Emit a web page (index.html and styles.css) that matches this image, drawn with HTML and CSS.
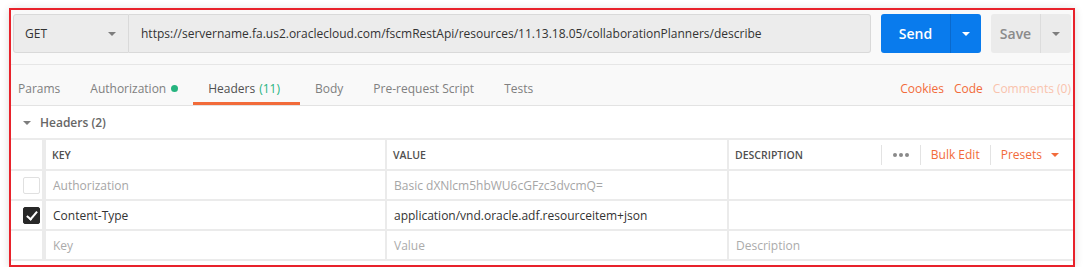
FILE: index.html
```html
<!DOCTYPE html>
<html lang="en-US">

<head>
    <meta charset="utf-8">
    <title>Request - Headers</title>
    <link rel="stylesheet" href="styles.css">
</head>

<body>
    <section class="frame">
        <div class="request">
            <div class="method">GET <i class="caret"></i></div>
            <div class="url">https://servername.fa.us2.oraclecloud.com/fscmRestApi/resources/11.13.18.05/collaborationPlanners/describe</div>
            <div class="btn btn-send">
                <span class="btn-label">Send</span>
                <span class="btn-drop"><i class="caret caret-white"></i></span>
            </div>
            <div class="btn btn-save">
                <span class="btn-label">Save</span>
                <span class="btn-drop"><i class="caret"></i></span>
            </div>
        </div>

        <div class="tabs">
            <ul class="tab-list">
                <li class="tab">Params</li>
                <li class="tab">Authorization <span class="dot"></span></li>
                <li class="tab active">Headers <span class="count">(11)</span></li>
                <li class="tab">Body</li>
                <li class="tab">Pre-request Script</li>
                <li class="tab">Tests</li>
            </ul>
            <div class="tab-links">
                <span class="link">Cookies</span>
                <span class="link">Code</span>
                <span class="link link-muted">Comments (0)</span>
            </div>
        </div>

        <div class="section-title"><i class="caret"></i>Headers (2)</div>

        <div class="kv">
            <div class="kv-row kv-head">
                <div class="cell cell-check"></div>
                <div class="cell">KEY</div>
                <div class="cell">VALUE</div>
                <div class="cell cell-desc">
                    DESCRIPTION
                    <div class="kv-actions">
                        <span class="action dots"><b></b><b></b><b></b></span>
                        <span class="action">Bulk Edit</span>
                        <span class="action">Presets <i class="caret caret-orange"></i></span>
                    </div>
                </div>
            </div>
            <div class="kv-row disabled">
                <div class="cell cell-check"><span class="checkbox"></span></div>
                <div class="cell">Authorization</div>
                <div class="cell">Basic dXNlcm5hbWU6cGFzc3dvcmQ=</div>
                <div class="cell"></div>
            </div>
            <div class="kv-row">
                <div class="cell cell-check"><span class="checkbox checked"></span></div>
                <div class="cell">Content-Type</div>
                <div class="cell">application/vnd.oracle.adf.resourceitem+json</div>
                <div class="cell"></div>
            </div>
            <div class="kv-row placeholder">
                <div class="cell cell-check"></div>
                <div class="cell">Key</div>
                <div class="cell">Value</div>
                <div class="cell">Description</div>
            </div>
        </div>
    </section>
</body>

</html>
```

FILE: styles.css
```css
html {
    background: #fff;
}

body {
    margin: 0;
    color: #333;
    font-family: "Open Sans", "Noto Sans", sans-serif;
    font-size: 12px;
}

.frame {
    box-sizing: border-box;
    width: 1066px;
    height: 259px;
    margin: 8px 0 0 9px;
    border: 2px solid #e8222b;
    background: #fff;
    box-shadow: 0 1px 8px rgba(0, 0, 0, 0.14);
}

/* triangles */
.caret {
    display: inline-block;
    width: 0;
    height: 0;
    border-left: 4px solid transparent;
    border-right: 4px solid transparent;
    border-top: 4px solid #7d7d7d;
}

.caret-white {
    border-top-color: #fff;
}

.caret-orange {
    border-top-color: #f26b3a;
    margin-left: 9px;
}

/* request bar */
.request {
    display: flex;
    padding: 4px 2px 11px;
    background: #f9f9f9;
    border-bottom: 1px solid #e6e6e6;
}

.method, .url {
    box-sizing: border-box;
    height: 39px;
    display: flex;
    align-items: center;
    background: #ececec;
    border: 1px solid #d9d9d9;
}

.method {
    width: 116px;
    padding: 0 12px 0 11px;
    justify-content: space-between;
    border-radius: 3px 0 0 3px;
}

.url {
    flex: 1;
    padding-left: 12px;
    border-left: none;
    border-radius: 0 3px 3px 0;
    white-space: nowrap;
    overflow: hidden;
}

.btn {
    display: flex;
    height: 39px;
    margin-left: 10px;
    border-radius: 3px;
    font-size: 14px;
    font-weight: 600;
}

.btn-label {
    display: flex;
    align-items: center;
    justify-content: center;
}

.btn-drop {
    width: 30px;
    display: flex;
    align-items: center;
    justify-content: center;
}

.btn-send {
    width: 100px;
    background: #097bed;
    color: #fff;
}

.btn-send .btn-label {
    width: 69px;
    border-right: 1px solid #0a69cc;
}

.btn-save {
    width: 80px;
    background: #ebebeb;
    color: #8a8a8a;
}

.btn-save .btn-label {
    width: 49px;
    border-right: 1px solid #dcdcdc;
}

/* tabs */
.tabs {
    display: flex;
    justify-content: space-between;
    height: 40px;
    background: #f9f9f9;
    border-bottom: 1px solid #e3e3e3;
}

.tab-list {
    display: flex;
    margin: 0;
    padding: 0 0 0 7px;
    list-style: none;
}

.tab {
    box-sizing: border-box;
    display: flex;
    align-items: center;
    padding: 10px 15px 0;
    border-bottom: 3px solid transparent;
    color: #808080;
}

.tab:first-child {
    padding-left: 0;
}

.tab.active {
    color: #505050;
    border-bottom-color: #f26b3a;
    padding-right: 20px;
}

.count {
    color: #26b47f;
    margin-left: 4px;
}

.dot {
    width: 7px;
    height: 7px;
    margin-left: 5px;
    border-radius: 50%;
    background: #26b47f;
}

.tab-links {
    display: flex;
    align-items: center;
    gap: 10px;
    padding: 10px 2px 0 0;
    box-sizing: border-box;
    height: 37px;
}

.link {
    color: #f26b3a;
}

.link-muted {
    color: #f9c3ad;
}

/* section */
.section-title {
    display: flex;
    align-items: center;
    height: 32px;
    padding: 1px 0 0 12px;
    box-sizing: border-box;
    color: #666;
    font-weight: 600;
}

.section-title .caret {
    margin-right: 9px;
}

/* key value editor */
.kv {
    border-top: 2px solid #ebebeb;
}

.kv-row {
    box-sizing: border-box;
    display: grid;
    grid-template-columns: 35px 341px 342px 1fr;
    height: 30px;
    border-bottom: 2px solid #ebebeb;
}

.kv-head {
    height: 31px;
}

.cell {
    box-sizing: border-box;
    display: flex;
    align-items: center;
    padding-left: 7px;
    border-right: 2px solid #ebebeb;
    white-space: nowrap;
}

.cell:last-child {
    border-right: none;
}

.cell-check {
    padding-left: 12px;
    border-right-width: 4px;
}

.kv-head .cell {
    padding-left: 6px;
    color: #505050;
    font-size: 10.5px;
    font-weight: 600;
}

.kv-head .cell-desc {
    padding-right: 14px;
}

.kv-actions {
    display: flex;
    align-items: center;
    margin-left: auto;
    font-size: 12px;
    font-weight: 400;
}

.action {
    display: flex;
    align-items: center;
    height: 20px;
    padding: 0 10px;
    border-left: 1px solid #e3e3e3;
    color: #f26b3a;
}

.action:last-child {
    padding-right: 0;
}

.dots {
    gap: 2px;
    padding: 0 11px;
}

.dots b {
    width: 4px;
    height: 4px;
    border-radius: 50%;
    background: #8a8a8a;
}

.checkbox {
    box-sizing: border-box;
    width: 17px;
    height: 17px;
    border: 1px solid #e0e0e0;
    border-radius: 2px;
    background: #fff;
    position: relative;
}

.checkbox.checked {
    background: #282828;
    border-color: #282828;
}

.checkbox.checked::after {
    content: "";
    position: absolute;
    left: 5px;
    top: 1px;
    width: 4px;
    height: 9px;
    border: solid #fff;
    border-width: 0 2px 2px 0;
    transform: rotate(40deg);
}

.disabled .cell {
    color: #a6a6a6;
}

.placeholder .cell {
    color: #ababab;
}
```
